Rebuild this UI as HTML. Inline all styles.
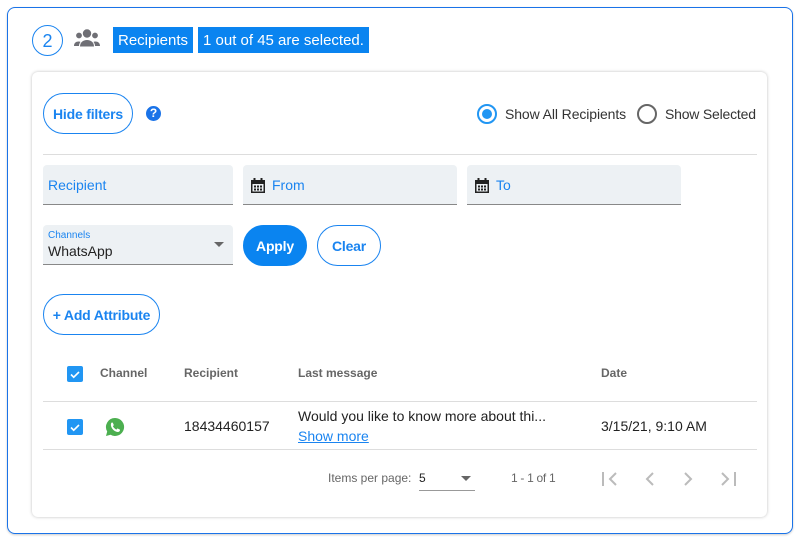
<!DOCTYPE html>
<html><head><meta charset="utf-8"><style>
*{box-sizing:border-box;margin:0;padding:0}
body{width:800px;height:541px;background:#fff;font-family:"Liberation Sans",Roboto,sans-serif;position:relative;overflow:hidden;color:#222}
.a{position:absolute}
.outer{left:7px;top:7px;width:786px;height:527px;border:1px solid #1a73e8;border-radius:8px;box-shadow:0 1px 2px rgba(0,0,0,.2)}
.card{left:32px;top:72px;width:735px;height:445px;border-radius:6px;box-shadow:0 0 3px rgba(0,0,0,.25);background:#fff}
.tag{background:#0a84f0;color:#fff;font-size:15px;height:26px;line-height:27px;padding:0 5px;top:27px}
.btn{border:1px solid #1a84f0;border-radius:21px;color:#1a84f0;font-weight:bold;font-size:14px;display:flex;align-items:center;justify-content:center;letter-spacing:-.2px}
.field{background:#edf1f4;border-bottom:1px solid #888;border-radius:4px 4px 0 0;height:40px;color:#1a84f0;font-size:14px;line-height:40px;padding-left:5px}
.th{font-size:12px;color:#666;font-weight:bold;top:366px}
.cb{width:16px;height:16px;background:#2196f3;border-radius:2px}
.line{height:1px;background:#ddd}
</style></head><body>
<div class="a outer"></div>
<div class="a" style="left:32px;top:25px;width:31px;height:31px;border:1px solid #1a84f0;border-radius:50%;color:#1a84f0;font-size:18px;text-align:center;line-height:30px">2</div>
<svg class="a" style="left:74px;top:29px" width="26" height="18" viewBox="0 0 26 18" fill="#6f6f75"><circle cx="13" cy="4.5" r="4.2"/><circle cx="5" cy="6.5" r="2.9"/><circle cx="21" cy="6.5" r="2.9"/><path d="M6 17.5c0-4 3-6.5 7-6.5s7 2.5 7 6.5z"/><path d="M0 17c0-3 2-4.5 4.5-4.5 1 0 1.5.2 2 .5-1 1-1.5 2.5-1.5 4z"/><path d="M26 17c0-3-2-4.5-4.5-4.5-1 0-1.5.2-2 .5 1 1 1.5 2.5 1.5 4z"/></svg>
<div class="a tag" style="left:113px">Recipients</div>
<div class="a tag" style="left:198px">1 out of 45 are selected.</div>
<div class="a card"></div>
<div class="a btn" style="left:43px;top:93px;width:90px;height:41px">Hide filters</div>
<div class="a" style="left:146px;top:106px;width:15px;height:15px;border-radius:50%;background:#1a73e8;color:#fff;font-size:12px;font-weight:bold;text-align:center;line-height:15px">?</div>
<div class="a" style="left:477px;top:104px;width:20px;height:20px;border:2px solid #2196f3;border-radius:50%"></div>
<div class="a" style="left:482px;top:109px;width:10px;height:10px;background:#2196f3;border-radius:50%"></div>
<div class="a" style="left:505px;top:106px;font-size:14px;color:#333;letter-spacing:-.1px">Show All Recipients</div>
<div class="a" style="left:637px;top:104px;width:20px;height:20px;border:2px solid #666;border-radius:50%"></div>
<div class="a" style="left:665px;top:106px;font-size:14px;color:#333;letter-spacing:-.2px">Show Selected</div>
<div class="a line" style="left:43px;top:154px;width:714px"></div>
<div class="a field" style="left:43px;top:165px;width:190px">Recipient</div>
<div class="a field" style="left:243px;top:165px;width:214px;padding-left:29px">From</div>
<div class="a field" style="left:467px;top:165px;width:214px;padding-left:29px">To</div>
<svg class="a" style="left:251px;top:178px" width="14" height="15" viewBox="0 0 14 15" fill="#222"><rect x="2.5" y="0" width="2" height="3"/><rect x="9.5" y="0" width="2" height="3"/><path d="M0 2h14v13H0z M1.5 6v7.5h11V6z" fill-rule="evenodd"/><rect x="3" y="7.5" width="2" height="2"/><rect x="6" y="7.5" width="2" height="2"/><rect x="9" y="7.5" width="2" height="2"/><rect x="3" y="10.5" width="2" height="2"/><rect x="6" y="10.5" width="2" height="2"/><rect x="9" y="10.5" width="2" height="2"/></svg>
<svg class="a" style="left:475px;top:178px" width="14" height="15" viewBox="0 0 14 15" fill="#222"><rect x="2.5" y="0" width="2" height="3"/><rect x="9.5" y="0" width="2" height="3"/><path d="M0 2h14v13H0z M1.5 6v7.5h11V6z" fill-rule="evenodd"/><rect x="3" y="7.5" width="2" height="2"/><rect x="6" y="7.5" width="2" height="2"/><rect x="9" y="7.5" width="2" height="2"/><rect x="3" y="10.5" width="2" height="2"/><rect x="6" y="10.5" width="2" height="2"/><rect x="9" y="10.5" width="2" height="2"/></svg>
<div class="a field" style="left:43px;top:225px;width:190px;line-height:normal;color:#222">
<div style="font-size:10px;color:#1a84f0;margin-top:5px">Channels</div>
<div style="font-size:14px;margin-top:2px">WhatsApp</div></div>
<div class="a" style="left:214px;top:242px;width:0;height:0;border-left:5px solid transparent;border-right:5px solid transparent;border-top:5px solid #666"></div>
<div class="a btn" style="left:243px;top:225px;width:64px;height:41px;background:#0a84f0;color:#fff;border-color:#0a84f0">Apply</div>
<div class="a btn" style="left:317px;top:225px;width:64px;height:41px">Clear</div>
<div class="a btn" style="left:43px;top:294px;width:117px;height:41px">+ Add Attribute</div>
<div class="a cb" style="left:67px;top:366px"></div>
<div class="a cb" style="left:67px;top:419px"></div>
<svg class="a" style="left:67px;top:366px" width="16" height="16"><path d="M4 8.5l2.7 2.7L12 6" stroke="#fff" stroke-width="1.6" fill="none"/></svg>
<svg class="a" style="left:67px;top:419px" width="16" height="16"><path d="M4 8.5l2.7 2.7L12 6" stroke="#fff" stroke-width="1.6" fill="none"/></svg>
<div class="a th" style="left:100px">Channel</div>
<div class="a th" style="left:184px">Recipient</div>
<div class="a th" style="left:298px">Last message</div>
<div class="a th" style="left:601px">Date</div>
<div class="a line" style="left:43px;top:401px;width:714px"></div>
<svg class="a" style="left:105px;top:417px" width="20" height="20" viewBox="0 0 20 20"><path d="M10 1a9 9 0 0 0-7.8 13.5L1 19l4.6-1.2A9 9 0 1 0 10 1z" fill="#4caf50"/><path d="M7 5.5c.4 0 .7 0 .9.5l.8 1.8c.1.3 0 .5-.2.8l-.6.7c.9 1.6 2 2.6 3.5 3.3l.7-.8c.2-.3.5-.3.8-.2l1.8.9c.3.2.4.4.3.8-.2 1.1-1.2 1.8-2.3 1.7-3.3-.4-6.4-3.5-6.8-6.8C5.8 6.9 6.2 5.6 7 5.5z" fill="#fff"/></svg>
<div class="a" style="left:184px;top:418px;font-size:14px">18434460157</div>
<div class="a" style="left:298px;top:408px;font-size:14px">Would you like to know more about thi...</div>
<div class="a" style="left:298px;top:428px;font-size:14px;color:#1a84f0;text-decoration:underline">Show more</div>
<div class="a" style="left:601px;top:418px;font-size:14px">3/15/21, 9:10 AM</div>
<div class="a line" style="left:43px;top:449px;width:714px"></div>
<div class="a" style="left:328px;top:471px;font-size:12px;color:#666">Items per page:</div>
<div class="a" style="left:419px;top:471px;font-size:12px;color:#222">5</div>
<div class="a" style="left:461px;top:476px;border-left:5px solid transparent;border-right:5px solid transparent;border-top:5px solid #666"></div>
<div class="a" style="left:419px;top:490px;width:56px;height:1px;background:#999"></div>
<div class="a" style="left:511px;top:471px;font-size:12px;color:#666;letter-spacing:-.3px">1 - 1 of 1</div>
<svg class="a" style="left:598px;top:469px" width="145" height="20" fill="none" stroke="#bbb" stroke-width="2"><path d="M5 3v14M18 4l-6 6 6 6"/><path d="M55 4l-6 6 6 6"/><path d="M87 4l6 6-6 6"/><path d="M124 4l6 6-6 6M137 3v14"/></svg>
</body></html>
